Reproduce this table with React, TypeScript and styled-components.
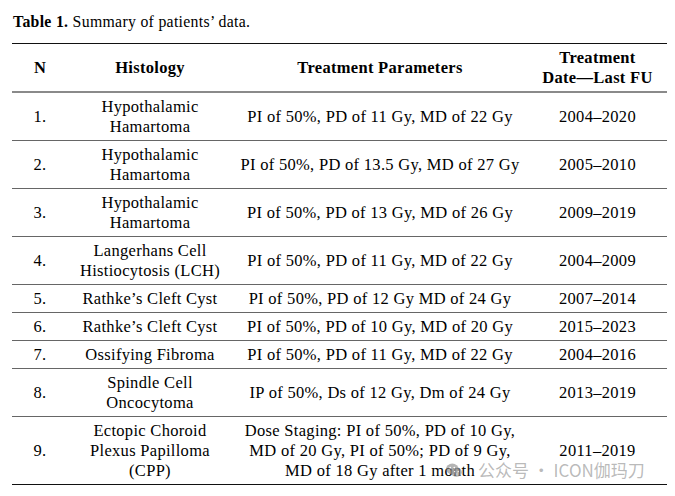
import React from "react";
import styled, { createGlobalStyle } from "styled-components";

interface IRow {
  n: string;
  histology: string[];
  params: string[];
  date: string;
}

const rows: IRow[] = [
  { n: "1.", histology: ["Hypothalamic", "Hamartoma"], params: ["PI of 50%, PD of 11 Gy, MD of 22 Gy"], date: "2004–2020" },
  { n: "2.", histology: ["Hypothalamic", "Hamartoma"], params: ["PI of 50%, PD of 13.5 Gy, MD of 27 Gy"], date: "2005–2010" },
  { n: "3.", histology: ["Hypothalamic", "Hamartoma"], params: ["PI of 50%, PD of 13 Gy, MD of 26 Gy"], date: "2009–2019" },
  { n: "4.", histology: ["Langerhans Cell", "Histiocytosis (LCH)"], params: ["PI of 50%, PD of 11 Gy, MD of 22 Gy"], date: "2004–2009" },
  { n: "5.", histology: ["Rathke’s Cleft Cyst"], params: ["PI of 50%, PD of 12 Gy MD of 24 Gy"], date: "2007–2014" },
  { n: "6.", histology: ["Rathke’s Cleft Cyst"], params: ["PI of 50%, PD of 10 Gy, MD of 20 Gy"], date: "2015–2023" },
  { n: "7.", histology: ["Ossifying Fibroma"], params: ["PI of 50%, PD of 11 Gy, MD of 22 Gy"], date: "2004–2016" },
  { n: "8.", histology: ["Spindle Cell", "Oncocytoma"], params: ["IP of 50%, Ds of 12 Gy, Dm of 24 Gy"], date: "2013–2019" },
  {
    n: "9.",
    histology: ["Ectopic Choroid", "Plexus Papilloma", "(CPP)"],
    params: [
      "Dose Staging: PI of 50%, PD of 10 Gy,",
      "MD of 20 Gy, PI of 50%; PD of 9 Gy,",
      "MD of 18 Gy after 1 month",
    ],
    date: "2011–2019",
  },
];

const GlobalStyle = createGlobalStyle`
  html, body {
    margin: 0;
    padding: 0;
    background: #fff;
  }
  body {
    font-family: "Liberation Serif", "Times New Roman", serif;
    color: #000;
  }
`;

const Page = styled.main`
  position: relative;
  width: 675px;
  height: 496px;
  box-sizing: border-box;
  padding: 12px 8px 0 12px;
  overflow: hidden;
`;

const Caption = styled.p`
  margin: 0 0 11px 1px;
  font-size: 15.8px;
  line-height: 20px;
  letter-spacing: 0.3px;
`;

const Table = styled.table`
  width: 655px;
  border-collapse: collapse;
  table-layout: fixed;
  font-size: 16.5px;
  line-height: 20px;
  letter-spacing: 0.3px;
`;

const HeadRow = styled.tr`
  border-top: 1.5px solid #111;
  border-bottom: 2px solid #8a8a8a;
`;

const BodyRow = styled.tr`
  border-bottom: 1px solid #666;

  &:last-child {
    border-bottom: 1.5px solid #111;
  }
`;

const HeadCell = styled.th<{ $w: number }>`
  box-sizing: border-box;
  width: ${(p) => p.$w}px;
  padding: 4px 0 3px;
  font-weight: 700;
  text-align: center;
  vertical-align: middle;
  white-space: nowrap;
`;

const Cell = styled.td`
  padding: 4px 0 3px;
  text-align: center;
  vertical-align: middle;
  white-space: nowrap;
`;

const Line = styled.span`
  display: block;
`;

const Watermark = styled.div`
  position: absolute;
  left: 446px;
  top: 461px;
  display: flex;
  align-items: center;
  gap: 16px;
  font-family: "Noto Sans CJK SC", "Noto Sans", sans-serif;
  font-size: 17px;
  line-height: 18px;
  color: rgba(140, 140, 140, 0.6);
  pointer-events: none;
`;

const Lines = ({ items }: { items: string[] }) => (
  <>
    {items.map((t) => (
      <Line key={t}>{t}</Line>
    ))}
  </>
);

function WeChatIcon() {
  return (
    <svg width="16" height="15" viewBox="0 0 16 15">
      <ellipse cx="6.3" cy="6" rx="6.3" ry="5.4" fill="rgba(130,130,130,0.6)" />
      <ellipse cx="10.4" cy="9.3" rx="5.6" ry="4.7" fill="rgba(150,150,150,0.6)" />
      <circle cx="4.2" cy="4.6" r="0.9" fill="#fff" />
      <circle cx="8.3" cy="4.6" r="0.9" fill="#fff" />
      <circle cx="8.6" cy="8.6" r="0.7" fill="#fff" />
      <circle cx="12.2" cy="8.6" r="0.7" fill="#fff" />
    </svg>
  );
}

function App() {
  return (
    <Page>
      <GlobalStyle />
      <Caption>
        <b>Table 1.</b> Summary of patients’ data.
      </Caption>
      <Table>
        <thead>
          <HeadRow>
            <HeadCell $w={56}>N</HeadCell>
            <HeadCell $w={164}>Histology</HeadCell>
            <HeadCell $w={296}>Treatment Parameters</HeadCell>
            <HeadCell $w={139}>
              <Lines items={["Treatment", "Date—Last FU"]} />
            </HeadCell>
          </HeadRow>
        </thead>
        <tbody>
          {rows.map((row) => (
            <BodyRow key={row.n}>
              <Cell>{row.n}</Cell>
              <Cell>
                <Lines items={row.histology} />
              </Cell>
              <Cell>
                <Lines items={row.params} />
              </Cell>
              <Cell>{row.date}</Cell>
            </BodyRow>
          ))}
        </tbody>
      </Table>
      <Watermark>
        <WeChatIcon />
        <span>公众号 · ICON伽玛刀</span>
      </Watermark>
    </Page>
  );
}

export default App;
